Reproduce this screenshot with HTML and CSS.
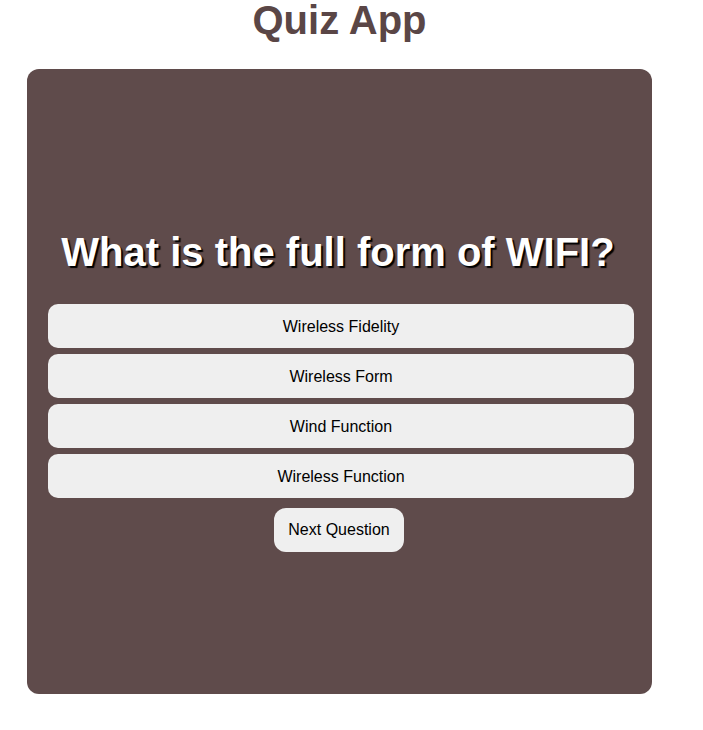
FILE: index.html
```html
<!DOCTYPE html>
<html>
<head>
<meta charset="utf-8">
<link rel="stylesheet" href="styles.css">
</head>
<body>
<h1 class="title">Quiz App</h1>
<div class="card">
  <h2 class="question">What is the full form of WIFI?</h2>
  <div class="options">
    <button class="option">Wireless Fidelity</button>
    <button class="option">Wireless Form</button>
    <button class="option">Wind Function</button>
    <button class="option">Wireless Function</button>
  </div>
  <button class="next">Next Question</button>
</div>
</body>
</html>
```
FILE: styles.css
```css
html, body {
  margin: 0;
  padding: 0;
  background: #ffffff;
  font-family: "Liberation Sans", Arial, sans-serif;
}
.title {
  margin: 0;
  width: 679px;
  text-align: center;
  font-size: 40px;
  line-height: 40px;
  font-weight: bold;
  color: #5a4646;
}
.card {
  box-sizing: border-box;
  margin: 29px 0 0 27px;
  width: 625px;
  height: 625px;
  background: #5f4b4b;
  border-radius: 12px;
  padding: 160px 18px 0 21px;
  display: flex;
  flex-direction: column;
  align-items: center;
}
.question {
  margin: 0 6px 29px 0;
  font-size: 40px;
  line-height: 46px;
  font-weight: bold;
  color: #ffffff;
  text-align: center;
  text-shadow: 2px 2px 1px #000000;
}
.options {
  display: flex;
  flex-direction: column;
  gap: 6px;
  width: 100%;
}
.option {
  height: 44px;
  width: 100%;
  border: none;
  border-radius: 10px;
  background: #efefef;
  color: #000000;
  font-family: "Liberation Sans", Arial, sans-serif;
  font-size: 16px;
  padding: 2px 0 0 0;
}
.next {
  margin: 10px 4px 0 0;
  height: 44px;
  width: 130px;
  border: none;
  border-radius: 12px;
  background: #efefef;
  color: #000000;
  font-family: "Liberation Sans", Arial, sans-serif;
  font-size: 16px;
  padding: 0;
}
```
